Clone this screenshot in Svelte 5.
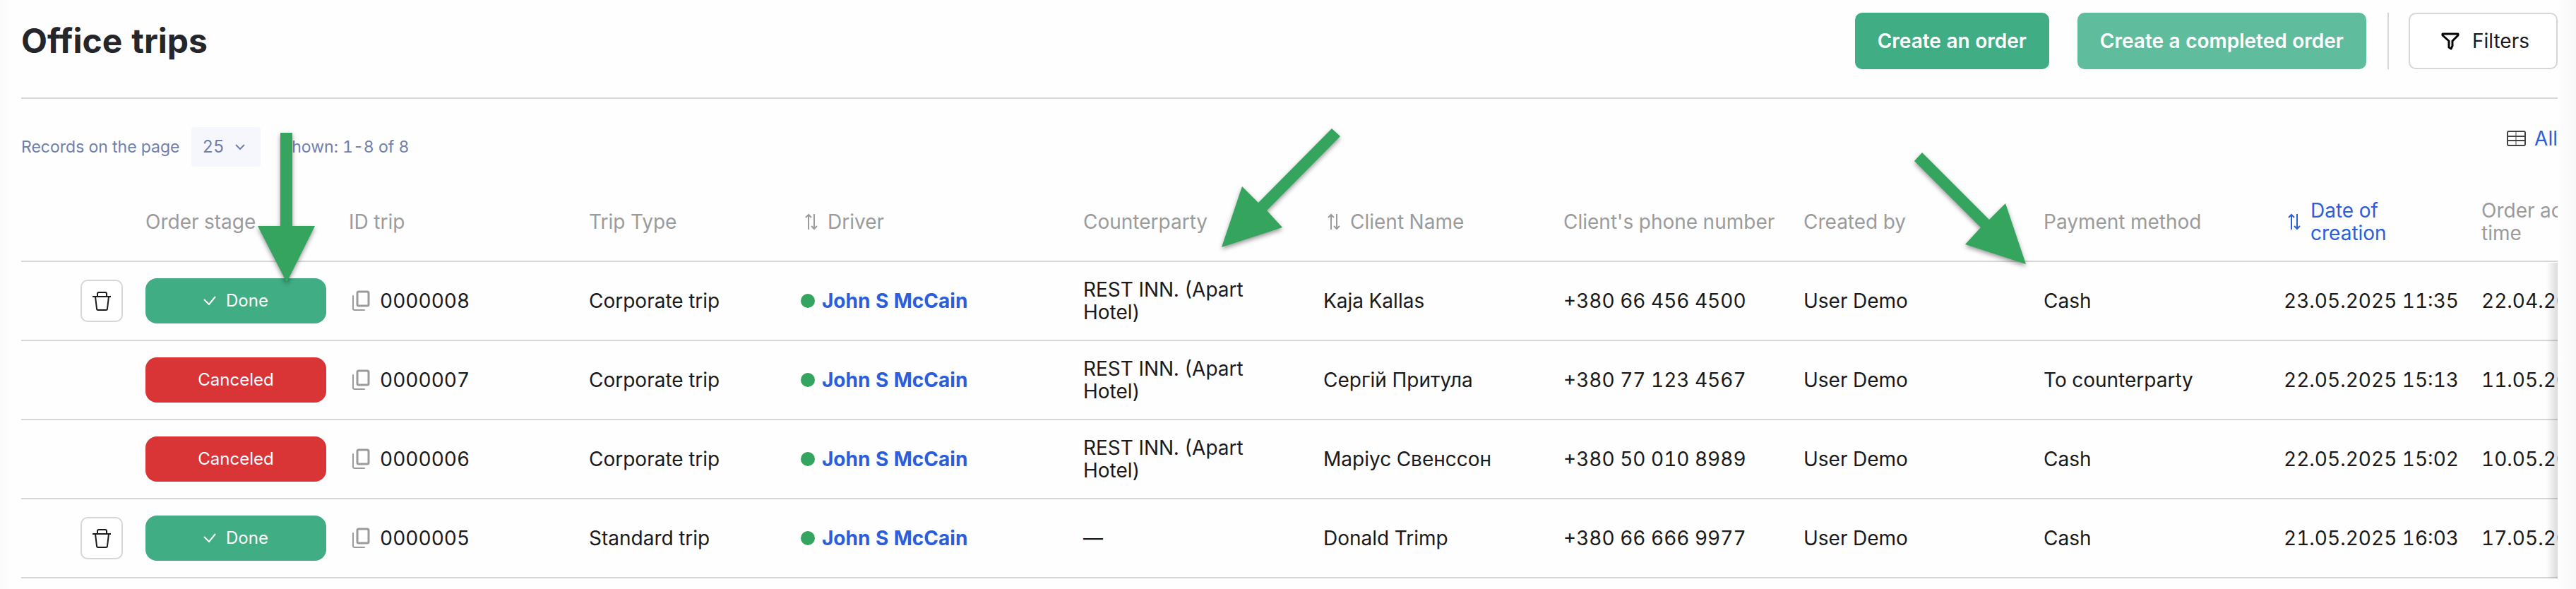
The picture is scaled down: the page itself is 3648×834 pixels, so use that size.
<script lang="ts">
	const columns = [
		{ label: 'Order stage', width: 288 },
		{ label: 'ID trip', width: 340 },
		{ label: 'Trip Type', width: 300 },
		{ label: 'Driver', width: 400, sortable: true },
		{ label: 'Counterparty', width: 340 },
		{ label: 'Client Name', width: 340, sortable: true },
		{ label: "Client's phone number", width: 340 },
		{ label: 'Created by', width: 340 },
		{ label: 'Payment method', width: 340 },
		{ label: 'Date of creation', width: 280, sortable: true, active: true },
		{ label: 'Order acceptance time', width: 280 }
	];

	const hotel = 'REST INN. (Apart Hotel)';

	const trips = [
		{ id: '0000008', done: true, type: 'Corporate trip', counterparty: hotel, client: 'Kaja Kallas', phone: '+380 66 456 4500', payment: 'Cash', created: '23.05.2025 11:35', accepted: '22.04.2025' },
		{ id: '0000007', done: false, type: 'Corporate trip', counterparty: hotel, client: 'Сергій Притула', phone: '+380 77 123 4567', payment: 'To counterparty', created: '22.05.2025 15:13', accepted: '11.05.2025' },
		{ id: '0000006', done: false, type: 'Corporate trip', counterparty: hotel, client: 'Маріус Свенссон', phone: '+380 50 010 8989', payment: 'Cash', created: '22.05.2025 15:02', accepted: '10.05.2025' },
		{ id: '0000005', done: true, type: 'Standard trip', counterparty: '—', client: 'Donald Trimp', phone: '+380 66 666 9977', payment: 'Cash', created: '21.05.2025 16:03', accepted: '17.05.2025' }
	];

	let perPage = '25';
</script>

<main>
	<header>
		<h1>Office trips</h1>
		<div class="actions">
			<button type="button" class="btn primary">Create an order</button>
			<button type="button" class="btn primary light">Create a completed order</button>
			<span class="divider"></span>
			<button type="button" class="btn outline">
				<svg width="26" height="26" viewBox="0 0 26 26" fill="none" stroke="#000" stroke-width="3" stroke-linejoin="round">
					<path d="M2 3h22v2l-8 8v7l-2 4-3-2v-9L2 5z" />
				</svg>
				Filters
			</button>
		</div>
	</header>

	<div class="toolbar">
		<div class="paging">
			<label for="per-page">Records on the page</label>
			<div class="select">
				<select id="per-page" bind:value={perPage}>
					<option>25</option>
					<option>50</option>
					<option>100</option>
				</select>
				<svg width="14" height="10" viewBox="0 0 14 10" fill="none" stroke="currentColor" stroke-width="2">
					<path d="M1 2l6 6 6-6" />
				</svg>
			</div>
			<span>Shown: 1-8 of 8</span>
		</div>
		<a class="all" href="#all">
			<svg width="27" height="24" viewBox="0 0 27 24" fill="none" stroke="#444" stroke-width="2">
				<rect x="1" y="2" width="25" height="20" rx="2" />
				<path d="M1 9h25M1 15h25" />
				<path d="M13 2v20" stroke-width="1" />
			</svg>
			All
		</a>
	</div>

	<div class="table-wrap">
		<table>
			<colgroup>
				<col style="width: 160px" />
				{#each columns as column}
					<col style="width: {column.width}px" />
				{/each}
			</colgroup>
			<thead>
				<tr>
					<th></th>
					{#each columns as column}
						<th class:active={column.active}>
							{#if column.sortable}
								<button type="button" class="sort">
									<svg width="18" height="24" viewBox="0 0 18 24" fill="none" stroke="currentColor" stroke-width="2">
										<path d="M5 23V2M1 6l4-4 4 4M13 1v21M9 18l4 4 4-4" />
									</svg>
									<span>{column.label}</span>
								</button>
							{:else}
								{column.label}
							{/if}
						</th>
					{/each}
				</tr>
			</thead>
			<tbody>
				{#each trips as trip}
					<tr>
						<td class="tools">
							{#if trip.done}
								<button type="button" class="delete" aria-label="Delete trip {trip.id}">
									<svg width="26" height="28" viewBox="0 0 26 28" fill="none" stroke="currentColor" stroke-width="2">
										<path d="M0 8h26M7 8V4q0-2 2-2h9q2 0 2 2v4M4 8l2 17q0 2 2 2h11q2 0 2-2l2-17" />
									</svg>
								</button>
							{/if}
						</td>
						<td>
							<button type="button" class="stage" class:done={trip.done}>
								{#if trip.done}
									<svg width="18" height="14" viewBox="0 0 18 14" fill="none" stroke="currentColor" stroke-width="2">
										<path d="M1 5l7 7L17 1" />
									</svg>
									Done
								{:else}
									Canceled
								{/if}
							</button>
						</td>
						<td>
							<div class="trip-id">
								<button type="button" class="copy" aria-label="Copy ID">
									<svg width="26" height="30" viewBox="0 0 26 30" fill="none" stroke="currentColor" stroke-width="3" stroke-linecap="round">
										<rect x="8" y="2" width="16" height="20" rx="2" />
										<path d="M2 8v18q0 2 2 2h14" stroke-width="2" />
									</svg>
								</button>
								{trip.id}
							</div>
						</td>
						<td>{trip.type}</td>
						<td>
							<div class="driver">
								<i></i>
								<a href="#driver">John S McCain</a>
							</div>
						</td>
						<td>{trip.counterparty}</td>
						<td>{trip.client}</td>
						<td>{trip.phone}</td>
						<td>User Demo</td>
						<td>{trip.payment}</td>
						<td class="nowrap">{trip.created}</td>
						<td class="nowrap">{trip.accepted}</td>
					</tr>
				{/each}
			</tbody>
		</table>
		<div class="edge"></div>
	</div>

	<svg class="arrow one" width="82" height="212" viewBox="0 0 82 212">
		<path d="M32 0h17v132h32L41 212 0 132h32z" />
	</svg>
	<svg class="arrow two" width="170" height="170" viewBox="0 0 170 170">
		<path d="M156 0l12 11L64 116l22 24L0 168 29 82l23 23z" />
	</svg>
	<svg class="arrow three" width="160" height="160" viewBox="0 0 160 160">
		<path d="M11 0L0 12l94 94-22 24 86 28-29-86-23 23z" />
	</svg>
</main>

<style>
	:global(body) {
		background: #fefefe;
		color: #1a1a1a;
		font-family: Inter, 'Liberation Sans', sans-serif;
		font-size: 28px;
		line-height: 32px;
		font-variant-numeric: tabular-nums;
	}

	main {
		position: relative;
		height: 100vh;
		padding: 0 26px 0 30px;
		box-sizing: border-box;
		overflow: hidden;
		background: linear-gradient(to right, #fbfbfb, #fefefe 20px, #fefefe calc(100% - 26px), #f8f8f8);
	}

	header {
		display: flex;
		justify-content: space-between;
		padding: 18px 0 40px;
		border-bottom: 2px solid #d6d6d6;
	}

	h1 {
		margin: 0;
		color: #25262b;
		font-size: 48px;
		line-height: 80px;
		font-weight: 700;
	}

	button,
	select {
		font: inherit;
		color: inherit;
		cursor: pointer;
	}

	.actions {
		display: flex;
	}

	.btn {
		display: flex;
		align-items: center;
		justify-content: center;
		height: 80px;
		padding: 0 32px;
		border: 0;
		border-radius: 10px;
	}

	.primary {
		margin-right: 40px;
		background: #40ad85;
		color: #fff;
		font-weight: 600;
	}

	.primary.light {
		margin-right: 30px;
		background: #5fbd9d;
	}

	.divider {
		width: 2px;
		margin-right: 28px;
		background: #d6d6d6;
	}

	.outline {
		gap: 18px;
		padding: 0 38px 0 44px;
		border: 2px solid #d6d6d6;
		background: #fff;
	}

	.toolbar {
		display: flex;
		justify-content: space-between;
		align-items: flex-start;
		padding: 40px 0 8px;
	}

	.paging {
		display: flex;
		align-items: center;
		color: #6f7fae;
		font-size: 23px;
	}

	.select {
		position: relative;
		display: flex;
		align-items: center;
		margin: 0 30px 0 16px;
	}

	select {
		appearance: none;
		width: 98px;
		height: 56px;
		padding: 0 16px;
		border: 0;
		border-radius: 4px;
		background: #f6f7fc;
		font-size: 24px;
	}

	.select svg {
		position: absolute;
		right: 22px;
		pointer-events: none;
	}

	.all {
		display: flex;
		align-items: center;
		gap: 12px;
	}

	a {
		color: #2b5ddc;
		text-decoration: none;
	}

	.table-wrap {
		position: relative;
		overflow: hidden;
	}

	table {
		width: 3748px;
		table-layout: fixed;
		border-collapse: collapse;
	}

	th,
	td {
		padding: 0 16px;
		border-bottom: 2px solid #d6d6d6;
		box-sizing: border-box;
		text-align: left;
	}

	th {
		height: 126px;
		padding-top: 14px;
		color: #9b9b9b;
		font-weight: 400;
	}

	th.active {
		color: #2b5ddc;
	}

	td {
		height: 112px;
	}

	.nowrap {
		white-space: nowrap;
	}

	.sort {
		display: flex;
		align-items: center;
		gap: 14px;
		padding: 0 0 0 6px;
		border: 0;
		background: none;
		text-align: left;
	}

	.sort svg,
	.btn svg {
		flex: none;
	}

	.tools .delete {
		display: flex;
		align-items: center;
		justify-content: center;
		width: 60px;
		height: 60px;
		margin-left: auto;
		padding: 0;
		border: 2px solid #d6d6d6;
		border-radius: 10px;
		background: #fff;
	}

	.stage {
		display: flex;
		align-items: center;
		justify-content: center;
		gap: 14px;
		width: 100%;
		height: 64px;
		border: 0;
		border-radius: 16px;
		background: #d93436;
		color: #fff;
		font-size: 24px;
	}

	.stage.done {
		background: #40ad85;
	}

	.trip-id {
		display: flex;
		align-items: center;
		gap: 14px;
	}

	.copy {
		display: flex;
		padding: 0 0 0 4px;
		border: 0;
		background: none;
		color: #9b9b9b;
	}

	.driver {
		display: flex;
		align-items: center;
		gap: 10px;
		font-weight: 700;
	}

	.driver i {
		width: 20px;
		height: 20px;
		border-radius: 50%;
		background: #34a45e;
	}

	.edge {
		position: absolute;
		top: 128px;
		right: 0;
		bottom: 0;
		width: 16px;
		background: linear-gradient(to right, transparent, rgba(0, 0, 0, 0.14));
	}

	.arrow {
		position: absolute;
		overflow: visible;
		fill: #34a45e;
		filter: drop-shadow(0 3px 3px rgba(0, 0, 0, 0.4));
	}

	.one {
		left: 365px;
		top: 188px;
	}

	.two {
		left: 1730px;
		top: 182px;
	}

	.three {
		left: 2711px;
		top: 216px;
	}
</style>
